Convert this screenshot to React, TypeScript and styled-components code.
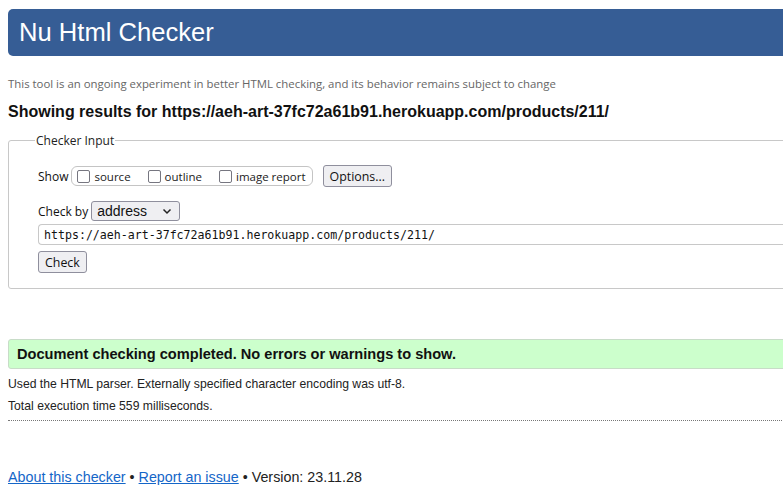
import React from 'react';
import styled, { createGlobalStyle } from 'styled-components';

const GlobalStyle = createGlobalStyle`
  html, body {
    margin: 0;
    padding: 0;
    background: #fff;
    overflow: hidden;
  }
  body {
    font-family: "Liberation Sans", Arial, sans-serif;
    color: #111;
  }
`;

const uiFont = `"Open Sans", "Noto Sans", sans-serif`;

const Page = styled.div`
  width: 860px;
  padding: 9px 8px 0 8px;
`;

const Header = styled.h1`
  margin: 0;
  height: 47px;
  display: flex;
  align-items: center;
  padding-left: 11px;
  background: #365d95;
  border-radius: 5px;
  color: #fff;
  font-size: 25.6px;
  font-weight: normal;
`;

const Disclaimer = styled.p`
  margin: 20px 0 0 0;
  font-family: ${uiFont};
  font-size: 11.4px;
  color: #666;
  line-height: 16px;
`;

const Results = styled.h2`
  margin: 10px 0 0 0;
  font-size: 16px;
  font-weight: bold;
  line-height: 20px;
`;

const Fieldset = styled.fieldset`
  margin: 10px 0 0 0;
  padding: 16px 0 14px 29px;
  border: 1px solid #c8c8c8;
  border-radius: 3px;
  font-family: ${uiFont};
  font-size: 12px;
  height: 157px;
  box-sizing: border-box;
`;

const Legend = styled.legend`
  margin-left: -3px;
  padding: 0 1px;
  font-size: 12px;
  color: #222;
`;

const Row = styled.div<{ gap?: number }>`
  display: flex;
  align-items: center;
  margin-top: ${({ gap }) => gap ?? 0}px;
`;

const Label = styled.span`
  font-size: 12px;
  margin-right: 3px;
`;

const OptionGroup = styled.div`
  display: flex;
  align-items: center;
  height: 18px;
  padding: 0 6px 0 5px;
  border: 1px solid #c4c4c4;
  border-radius: 6px;
  gap: 17px;
`;

const CheckItem = styled.label`
  display: flex;
  align-items: center;
  font-size: 11.5px;
  color: #222;
`;

const Box = styled.span`
  width: 11px;
  height: 11px;
  border: 1.5px solid #767680;
  border-radius: 2px;
  margin-right: 4px;
  background: #fff;
`;

const Button = styled.button<{ ml?: number }>`
  margin-left: ${({ ml }) => ml ?? 0}px;
  height: 22px;
  padding: 0 6px;
  font-family: ${uiFont};
  font-size: 12.4px;
  color: #111;
  background: #efeff2;
  border: 1px solid #8f8f9d;
  border-radius: 3px;
`;

const Select = styled.div`
  width: 89px;
  height: 20px;
  box-sizing: border-box;
  display: flex;
  align-items: center;
  justify-content: space-between;
  padding: 0 7px 0 5px;
  background: #efeff2;
  border: 1px solid #8f8f9d;
  border-radius: 3px;
  font-family: "Liberation Sans", Arial, sans-serif;
  font-size: 14px;
  color: #111;
`;

const UrlInput = styled.div`
  margin-top: 3px;
  height: 21px;
  box-sizing: border-box;
  display: flex;
  align-items: center;
  padding-left: 5px;
  border: 1px solid #c8c8c8;
  border-right: none;
  border-radius: 4px 0 0 4px;
  font-family: "DejaVu Sans Mono", monospace;
  font-size: 11.6px;
  color: #111;
`;

const Success = styled.div`
  margin-top: 50px;
  height: 30px;
  box-sizing: border-box;
  display: flex;
  align-items: center;
  padding-left: 8px;
  background: #ccffcc;
  border: 1px solid #c8dcc8;
  border-radius: 3px;
  font-size: 14.6px;
  font-weight: bold;
`;

const Details = styled.p<{ gap?: number }>`
  margin: ${({ gap }) => gap ?? 0}px 0 0 0;
  font-size: 12.2px;
  line-height: 22px;
  color: #222;
`;

const Rule = styled.hr`
  margin: 3px 0 0 0;
  border: none;
  border-top: 1px dotted #777;
`;

const Footer = styled.p`
  margin: 48px 0 0 0;
  font-size: 14.3px;
  color: #222;
`;

const Link = styled.a`
  color: #1466c8;
  text-decoration: underline;
`;

const Chevron = () => (
  <svg width="10" height="7" viewBox="0 0 10 7">
    <path d="M1.5 1.5 L5 5 L8.5 1.5" fill="none" stroke="#222" strokeWidth="1.5" />
  </svg>
);

const url = 'https://aeh-art-37fc72a61b91.herokuapp.com/products/211/';

export default function App() {
  return (
    <>
      <GlobalStyle />
      <Page>
        <Header>Nu Html Checker</Header>
        <Disclaimer>
          This tool is an ongoing experiment in better HTML checking, and its behavior remains subject to change
        </Disclaimer>
        <Results>Showing results for {url}</Results>
        <Fieldset>
          <Legend>Checker Input</Legend>
          <Row>
            <Label>Show</Label>
            <OptionGroup>
              <CheckItem><Box />source</CheckItem>
              <CheckItem><Box />outline</CheckItem>
              <CheckItem><Box />image report</CheckItem>
            </OptionGroup>
            <Button ml={10}>Options...</Button>
          </Row>
          <Row gap={14}>
            <Label>Check by</Label>
            <Select>
              address
              <Chevron />
            </Select>
          </Row>
          <UrlInput>{url}</UrlInput>
          <Row gap={6}>
            <Button>Check</Button>
          </Row>
        </Fieldset>
        <Success>Document checking completed. No errors or warnings to show.</Success>
        <Details gap={4}>Used the HTML parser. Externally specified character encoding was utf-8.</Details>
        <Details>Total execution time 559 milliseconds.</Details>
        <Rule />
        <Footer>
          <Link href="#">About this checker</Link> • <Link href="#">Report an issue</Link> • Version: 23.11.28
        </Footer>
      </Page>
    </>
  );
}
